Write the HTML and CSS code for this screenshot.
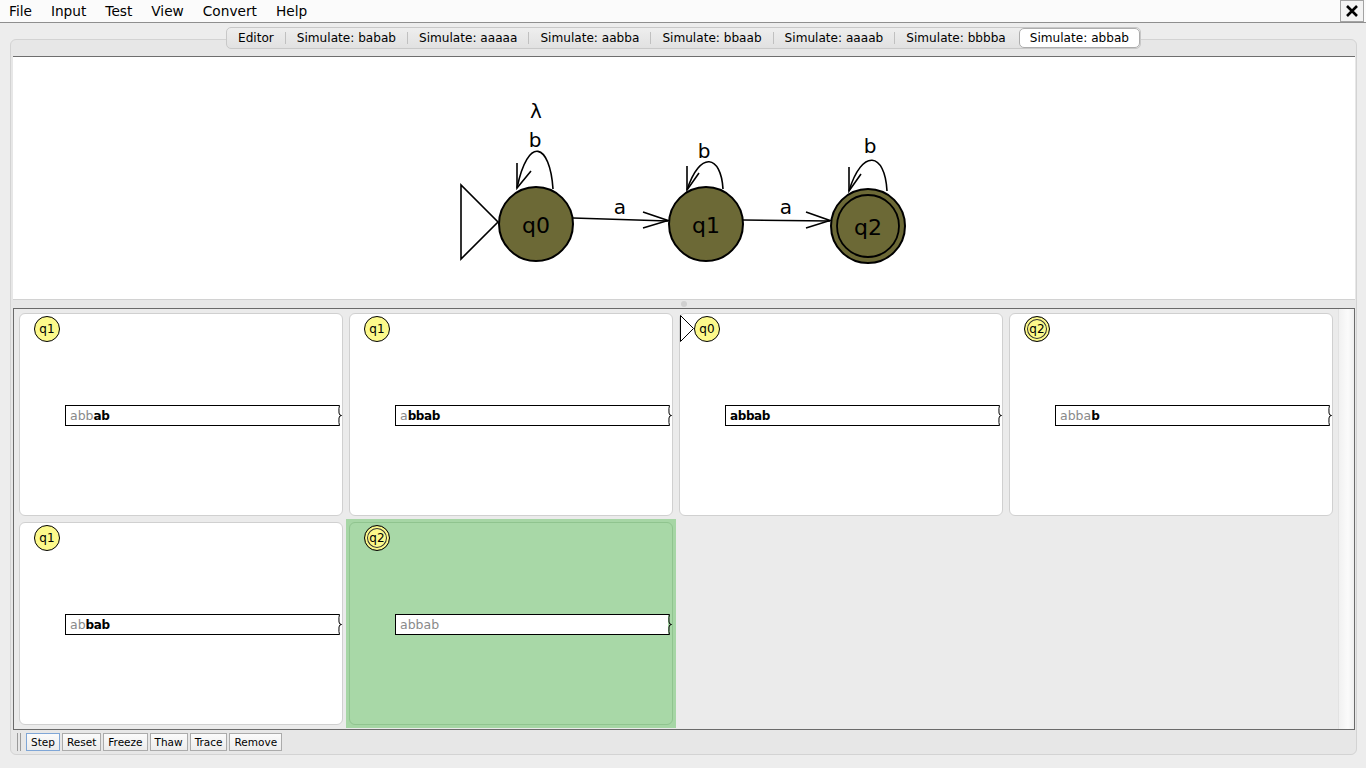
FILE: index.html
```html
<!DOCTYPE html>
<html>
<head>
<meta charset="utf-8">
<title>JFLAP</title>
<link rel="stylesheet" href="styles.css">
</head>
<body>
<div class="menubar">
  <span class="menu">File</span>
  <span class="menu">Input</span>
  <span class="menu">Test</span>
  <span class="menu">View</span>
  <span class="menu">Convert</span>
  <span class="menu">Help</span>
  <div class="close">
    <svg width="14" height="14" viewBox="0 0 14 14"><path d="M2 2 L12 12 M12 2 L2 12" stroke="#000" stroke-width="2.6" fill="none"/></svg>
  </div>
</div>
<div class="main">
  <div class="tabs">
    <div class="tabstrip">
      <div class="tab">Editor</div><span class="sep"></span>
      <div class="tab">Simulate: babab</div><span class="sep"></span>
      <div class="tab">Simulate: aaaaa</div><span class="sep"></span>
      <div class="tab">Simulate: aabba</div><span class="sep"></span>
      <div class="tab">Simulate: bbaab</div><span class="sep"></span>
      <div class="tab">Simulate: aaaab</div><span class="sep"></span>
      <div class="tab">Simulate: bbbba</div>
      <div class="tab active">Simulate: abbab</div>
    </div>
  </div>
  <div class="panel">
    <div class="content">
      <div class="diagram">
        <svg class="automaton" width="1342" height="242" viewBox="13 57 1342 242">
          <g fill="none" stroke="#000" stroke-width="1.6">
            <polygon points="461,185 461,259 498,222" fill="#fff"/>
            <line x1="573" y1="218" x2="668" y2="221"/>
            <polyline points="643,212 668,220.5 643,228"/>
            <line x1="743" y1="220" x2="830" y2="221"/>
            <polyline points="806,212 830,220.5 806,228"/>
            <path d="M553 189 C550 143 528 135 517 188"/>
            <polyline points="517,163 517,188 531,171"/>
            <path d="M723 189 C721 155 700 150 687 190"/>
            <polyline points="687,166 687,190 699,173"/>
            <path d="M887 191 C885 152 862 148 849 191"/>
            <polyline points="849,167 849,191 861,174"/>
          </g>
          <g fill="#6c6936" stroke="#000" stroke-width="2">
            <circle cx="536" cy="224" r="37"/>
            <circle cx="706" cy="224" r="37"/>
            <circle cx="868" cy="226" r="37"/>
            <circle cx="868" cy="226" r="31" fill="none" stroke-width="1.8"/>
          </g>
          <g class="svgtext" font-size="22" text-anchor="middle">
            <text x="536" y="233">q0</text>
            <text x="706" y="233">q1</text>
            <text x="868" y="235">q2</text>
          </g>
          <g class="svgtext" font-size="20" text-anchor="middle">
            <text x="620" y="214">a</text>
            <text x="786" y="214">a</text>
            <text x="535" y="147">b</text>
            <text x="536" y="118">λ</text>
            <text x="704" y="158">b</text>
            <text x="870" y="153">b</text>
          </g>
        </svg>
      </div>
      <div class="divider"><span class="dot"></span></div>
      <div class="lower">
        <div class="grid">
          <div class="cell">
            <div class="card">
              <div class="badge-row"><div class="badge">q1</div></div>
              <div class="tape"><div class="tape-text"><span class="used">abb</span><b>ab</b></div><svg class="tape-end" width="4" height="21" viewBox="0 0 4 21"><path d="M0 0.5 H1.5 Q0.6 3 1 8 Q1.3 10.5 3.5 10.5 Q1.3 10.5 1 13 Q0.6 18 1.5 20.5 H0" fill="none" stroke="#000" stroke-width="1"/></svg></div>
            </div>
          </div>
          <div class="cell">
            <div class="card">
              <div class="badge-row"><div class="badge">q1</div></div>
              <div class="tape"><div class="tape-text"><span class="used">a</span><b>bbab</b></div><svg class="tape-end" width="4" height="21" viewBox="0 0 4 21"><path d="M0 0.5 H1.5 Q0.6 3 1 8 Q1.3 10.5 3.5 10.5 Q1.3 10.5 1 13 Q0.6 18 1.5 20.5 H0" fill="none" stroke="#000" stroke-width="1"/></svg></div>
            </div>
          </div>
          <div class="cell">
            <div class="card">
              <div class="badge-row"><svg class="start" width="14" height="27" viewBox="0 0 14 27"><polygon points="0.5,0.5 0.5,26.5 13.5,13.5" fill="#fff" stroke="#000" stroke-width="1"/></svg><div class="badge">q0</div></div>
              <div class="tape"><div class="tape-text"><b>abbab</b></div><svg class="tape-end" width="4" height="21" viewBox="0 0 4 21"><path d="M0 0.5 H1.5 Q0.6 3 1 8 Q1.3 10.5 3.5 10.5 Q1.3 10.5 1 13 Q0.6 18 1.5 20.5 H0" fill="none" stroke="#000" stroke-width="1"/></svg></div>
            </div>
          </div>
          <div class="cell">
            <div class="card">
              <div class="badge-row"><div class="badge final">q2</div></div>
              <div class="tape"><div class="tape-text"><span class="used">abba</span><b>b</b></div><svg class="tape-end" width="4" height="21" viewBox="0 0 4 21"><path d="M0 0.5 H1.5 Q0.6 3 1 8 Q1.3 10.5 3.5 10.5 Q1.3 10.5 1 13 Q0.6 18 1.5 20.5 H0" fill="none" stroke="#000" stroke-width="1"/></svg></div>
            </div>
          </div>
          <div class="cell">
            <div class="card">
              <div class="badge-row"><div class="badge">q1</div></div>
              <div class="tape"><div class="tape-text"><span class="used">ab</span><b>bab</b></div><svg class="tape-end" width="4" height="21" viewBox="0 0 4 21"><path d="M0 0.5 H1.5 Q0.6 3 1 8 Q1.3 10.5 3.5 10.5 Q1.3 10.5 1 13 Q0.6 18 1.5 20.5 H0" fill="none" stroke="#000" stroke-width="1"/></svg></div>
            </div>
          </div>
          <div class="cell selected">
            <div class="card">
              <div class="badge-row"><div class="badge final">q2</div></div>
              <div class="tape"><div class="tape-text"><span class="used">abbab</span></div><svg class="tape-end" width="4" height="21" viewBox="0 0 4 21"><path d="M0 0.5 H1.5 Q0.6 3 1 8 Q1.3 10.5 3.5 10.5 Q1.3 10.5 1 13 Q0.6 18 1.5 20.5 H0" fill="none" stroke="#000" stroke-width="1"/></svg></div>
            </div>
          </div>
        </div>
        <div class="scrollbar"></div>
      </div>
      <div class="toolbar">
        <span class="grip"></span>
        <button class="btn focus">Step</button>
        <button class="btn">Reset</button>
        <button class="btn">Freeze</button>
        <button class="btn">Thaw</button>
        <button class="btn">Trace</button>
        <button class="btn">Remove</button>
      </div>
    </div>
  </div>
</div>
</body>
</html>
```
FILE: styles.css
```css
* { box-sizing: border-box; }
html, body { margin: 0; padding: 0; }
body {
  width: 1366px;
  height: 768px;
  overflow: hidden;
  background: #ededed;
  font-family: "DejaVu Sans", "Liberation Sans", sans-serif;
  color: #000;
}

/* menu bar */
.menubar {
  display: flex;
  align-items: center;
  height: 23px;
  background: #fbfbfb;
  border-bottom: 1px solid #8f8f8f;
  padding-left: 9px;
}
.menu {
  font-size: 13.7px;
  line-height: 22px;
  margin-right: 19px;
}
.close {
  margin-left: auto;
  margin-right: 2px;
  align-self: flex-start;
  width: 24px;
  height: 22px;
  border: 1px solid #a3a3a3;
  background: #f3f3f3;
  display: flex;
  align-items: center;
  justify-content: center;
}

/* main area */
.main {
  padding: 4px 9px 0 10px;
}
.tabs {
  display: flex;
  justify-content: center;
  position: relative;
  z-index: 1;
  height: 22px;
}
.tabstrip {
  display: flex;
  align-items: center;
  height: 22px;
  border: 1px solid #c8c8c8;
  border-radius: 5px;
  background: linear-gradient(#eeeeee, #e1e1e1);
}
.tab {
  font-size: 12.1px;
  padding: 0 11px;
  height: 20px;
  line-height: 20px;
  white-space: nowrap;
}
.sep {
  width: 1px;
  height: 12px;
  background: #c0c0c0;
}
.tab.active {
  background: #fff;
  border: 1px solid #adadad;
  border-radius: 5px;
  margin-left: 2px;
  padding: 0 10px;
  line-height: 18px;
}

.panel {
  margin-top: -10px;
  border: 1px solid #d3d3d3;
  border-radius: 6px;
  background: #e7e7e7;
  padding: 16px 1px 3px 2px;
}

.diagram {
  height: 244px;
  background: #fff;
  border-top: 1px solid #6e6e6e;
  border-bottom: 1px solid #d2d2d2;
}
.automaton { display: block; }
.svgtext { font-family: "DejaVu Sans", sans-serif; fill: #000; }

.divider {
  height: 8px;
  display: flex;
  align-items: center;
  justify-content: center;
}
.dot {
  width: 6px;
  height: 6px;
  border-radius: 50%;
  background: #d0d0d0;
}

.lower {
  height: 422px;
  border: 1px solid #6a6a6a;
  background: #ebebeb;
  display: flex;
  overflow: hidden;
}
.grid {
  flex: 1;
  padding: 1px 0 0 2px;
  display: grid;
  grid-template-columns: repeat(4, 330px);
  grid-auto-rows: 209px;
}
.scrollbar {
  width: 16px;
  background: linear-gradient(90deg, #f1f1f1, #fbfbfb 60%, #efefef);
  border-left: 1px solid #e2e2e2;
}
.cell {
  padding: 3px;
}
.cell.selected {
  background: #a6d6a5;
}
.card {
  height: 100%;
  background: #fff;
  border: 1px solid #d0d0d0;
  border-radius: 6px;
  padding: 2px 0 0 14px;
}
.cell.selected .card {
  background: #a8d8a7;
  border-color: #90c48f;
}
.badge-row {
  display: flex;
  height: 26px;
}
.start {
  margin-left: -14px;
  margin-top: -1px;
}
.badge {
  width: 26px;
  height: 26px;
  border-radius: 50%;
  border: 1px solid #000;
  background: #fcf98b;
  font-size: 12px;
  display: flex;
  align-items: center;
  justify-content: center;
}
.badge.final {
  box-shadow: inset 0 0 0 2px #fcf98b, inset 0 0 0 3px #333;
}
.tape {
  display: flex;
  height: 21px;
  margin: 63px 0 0 31px;
}
.tape-text {
  flex: 1;
  background: #fff;
  border: 1px solid #000;
  border-right: none;
  font-size: 12.5px;
  line-height: 19px;
  padding-left: 4px;
  white-space: nowrap;
}
.tape-end {
  display: block;
  background: #fff;
}
.cell.selected .tape-end { background: transparent; }
.used { color: #8a8a8a; }
.tape-text b {
  font-weight: bold;
  font-size: 12px;
  letter-spacing: -0.4px;
}

.toolbar {
  height: 21px;
  padding: 3px 0 0 4px;
  display: flex;
  align-items: flex-start;
  gap: 2px;
}
.grip {
  width: 4px;
  height: 18px;
  border-left: 1px solid #9a9a9a;
  border-right: 1px solid #9a9a9a;
  margin-right: 3px;
}
.btn {
  height: 18px;
  margin: 0;
  padding: 0 4px;
  border: 1px solid #ababab;
  background: linear-gradient(#fbfbfb, #ececec);
  font-family: "DejaVu Sans", sans-serif;
  font-size: 10.5px;
  line-height: 16px;
  color: #000;
  border-radius: 0;
}
.btn.focus {
  border-color: #7fa6d6;
}
```
